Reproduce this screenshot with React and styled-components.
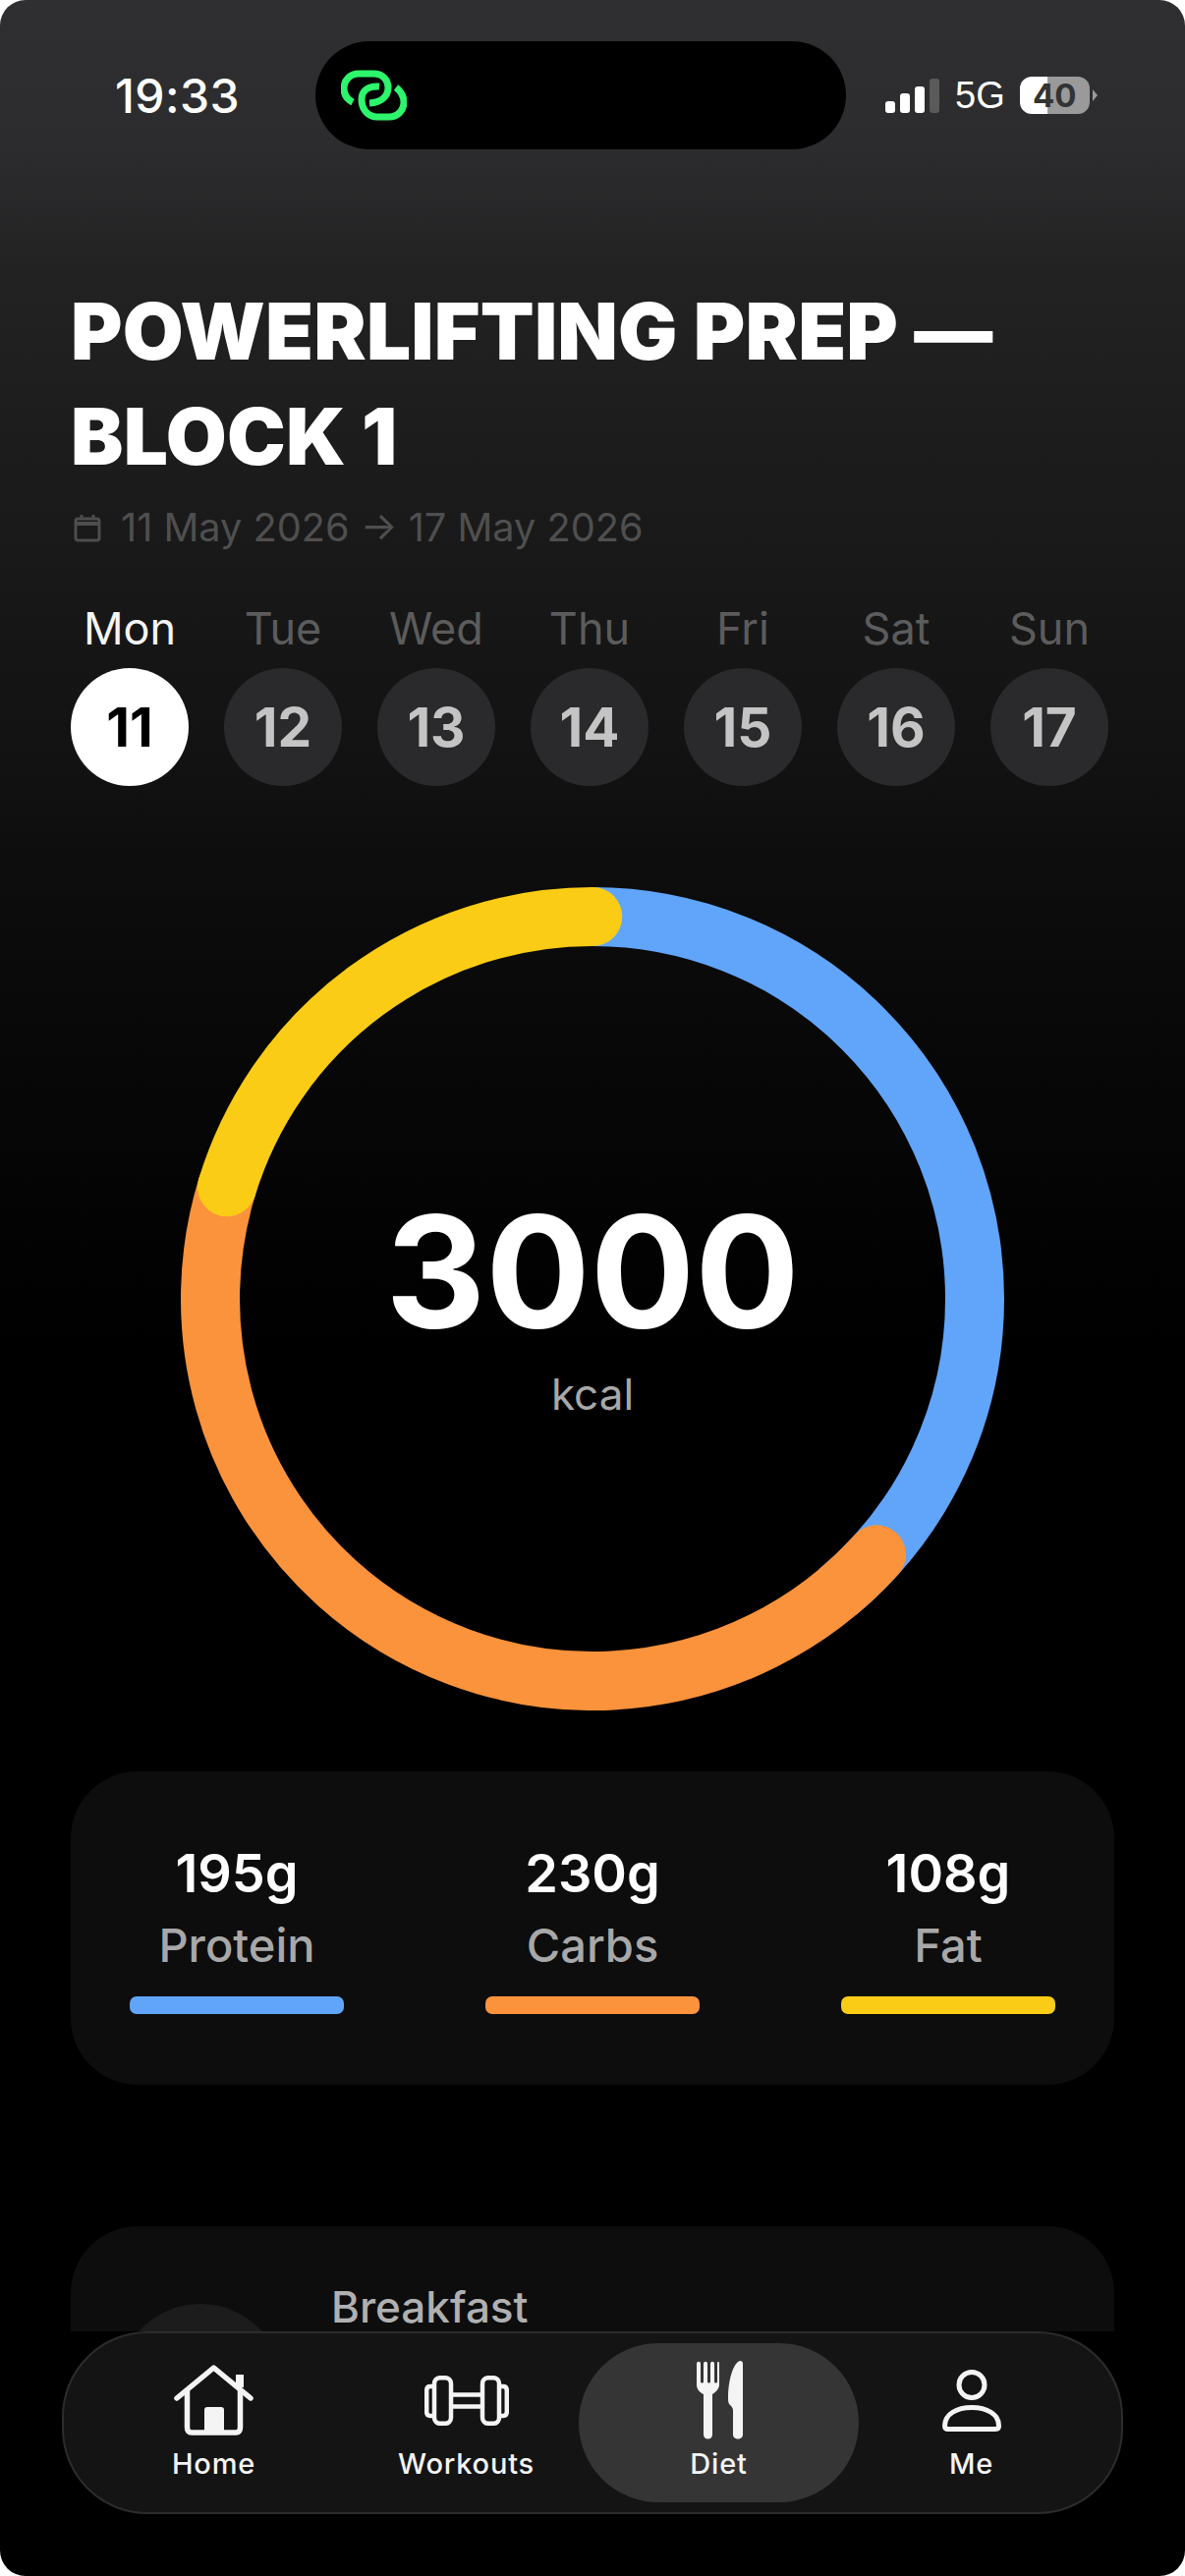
import React from "react";
import styled, { createGlobalStyle } from "styled-components";

const days = [
  ["Mon", 11],
  ["Tue", 12],
  ["Wed", 13],
  ["Thu", 14],
  ["Fri", 15],
  ["Sat", 16],
  ["Sun", 17],
];
const macros = [
  ["195g", "Protein", "#60a5fa"],
  ["230g", "Carbs", "#fb923c"],
  ["108g", "Fat", "#facc15"],
];

function Arc({ start, end, color, round }) {
  const r = 389;
  const c = 2 * Math.PI * r;
  return (
    <circle
      cx="419"
      cy="419"
      r={r}
      fill="none"
      stroke={color}
      strokeWidth="60"
      strokeLinecap={round ? "round" : "butt"}
      strokeDasharray={`${((end - start) / 360) * c} ${c}`}
      transform={`rotate(${start - 90} 419 419)`}
    />
  );
}

function Ring() {
  return (
    <RingSvg viewBox="0 0 838 838">
      <Arc start={0} end={140} color="#60a5fa" />
      <Arc start={132} end={287} color="#fb923c" round />
      <Arc start={287} end={360} color="#facc15" round />
    </RingSvg>
  );
}

function App() {
  return (
    <Screen>
      <GlobalStyle />
      <StatusBar>
        <Time>19:33</Time>
        <Island>
          <svg width="67" height="52" viewBox="0 0 67 52" fill="none" stroke="#2df56c" strokeWidth="7">
            <path d="M12 33C6 30 3 25 3 19C3 10 10 4 18 4H33C43 4 48 11 48 18C48 27 41 33 29 34" />
            <path d="M39 17C27 16 21 22 21 30C21 41 28 48 37 48H49C58 48 64 41 64 33C64 27 61 22 56 18" />
          </svg>
        </Island>
        <StatusRight>
          <Signal>
            <SignalBar $h={12} />
            <SignalBar $h={20} />
            <SignalBar $h={27} />
            <SignalBar $h={35} $off />
          </Signal>
          <Network>5G</Network>
          <Battery>40</Battery>
          <BatteryTip />
        </StatusRight>
      </StatusBar>

      <Scroll>
        <Title>POWERLIFTING PREP — BLOCK 1</Title>
        <DateRow>
          <DateIcon width="28" height="30" viewBox="0 0 28 30" fill="none" stroke="#4d4d4d" strokeWidth="3">
            <rect x="2" y="6" width="24" height="22" rx="2.5" />
            <path d="M2 11H26" strokeWidth="4" />
            <path d="M8 2V6M20 2V6" />
          </DateIcon>
          <span>11 May 2026 → 17 May 2026</span>
        </DateRow>
        <Week>
          {days.map(([name, num], i) => (
            <Day key={name}>
              <DayName $active={i === 0}>{name}</DayName>
              <DayNum $active={i === 0}>{num}</DayNum>
            </Day>
          ))}
        </Week>
        <RingWrap>
          <Ring />
          <RingLabel>
            <Kcal>3000</Kcal>
            <KcalUnit>kcal</KcalUnit>
          </RingLabel>
        </RingWrap>
        <MacroCard>
          {macros.map(([value, name, color]) => (
            <Macro key={name}>
              <MacroValue>{value}</MacroValue>
              <MacroName>{name}</MacroName>
              <MacroBar $color={color} />
            </Macro>
          ))}
        </MacroCard>
        <MealCard>
          <MealIcon />
          <MealName>Breakfast</MealName>
        </MealCard>
      </Scroll>

      <Nav>
        <NavItem>
          <IconSlot>
            <svg width="81" height="72" viewBox="0 0 81 72" fill="none" stroke="#f4f4f4" strokeWidth="5.5" strokeLinecap="round" strokeLinejoin="round">
              <path d="M3 34L40.5 3L78 34" />
              <path d="M67 23V10" strokeWidth="8" strokeLinecap="butt" />
              <path d="M13.5 27V64C13.5 67 15 69 18 69H63C66 69 67.5 67 67.5 64V27" />
              <path d="M31 69V46C31 44 32 43 34 43H48C50 43 51 44 51 46V69Z" fill="#f4f4f4" stroke="none" />
            </svg>
          </IconSlot>
          <NavLabel>Home</NavLabel>
        </NavItem>
        <NavItem>
          <IconSlot>
            <svg width="86" height="51" viewBox="0 0 86 51" fill="none" stroke="#f4f4f4" strokeWidth="4.5" strokeLinejoin="round">
              <path d="M10 11H6C3.5 11 2.2 12.5 2.2 15V37C2.2 39.5 3.5 41 6 41H10" />
              <rect x="10" y="2.2" width="17" height="46.6" rx="6" />
              <rect x="59" y="2.2" width="17" height="46.6" rx="6" />
              <path d="M76 11H80C82.5 11 83.8 12.5 83.8 15V37C83.8 39.5 82.5 41 80 41H76" />
              <path d="M27 19.5H59M27 31.5H59" />
            </svg>
          </IconSlot>
          <NavLabel>Workouts</NavLabel>
        </NavItem>
        <NavItem $active>
          <IconSlot>
            <svg width="48" height="80" viewBox="0 0 48 80" fill="#f4f4f4">
              <path d="M1 3C1 0 5 0 5 3V21C5 23 8 23 8 21V3C8 0 12 0 12 3V21C12 23 15 23 15 21V3C15 0 19 0 19 3V21C19 23 22 23 22 21V3C22 0 24 0 24 3V24C24 29 20 32 17 34V75C17 81 8 81 8 75V34C4 32 1 29 1 24Z" />
              <path d="M45 0C47 0 48 1 48 3V75C48 81 38 81 38 75V51C38 48 37 47 35 45C33 43 33 41 33 37C33 22 37 7 42 2C43 1 44 0 45 0Z" />
            </svg>
          </IconSlot>
          <NavLabel>Diet</NavLabel>
        </NavItem>
        <NavItem>
          <IconSlot>
            <svg width="60" height="63" viewBox="0 0 60 63" fill="none" stroke="#f4f4f4" strokeWidth="5" strokeLinejoin="round">
              <circle cx="30" cy="15.5" r="13" />
              <path d="M2.5 57C2.5 45 15 38.5 30 38.5C45 38.5 57.5 45 57.5 57C57.5 59.5 56.5 60.5 54 60.5H6C3.5 60.5 2.5 59.5 2.5 57Z" />
            </svg>
          </IconSlot>
          <NavLabel>Me</NavLabel>
        </NavItem>
      </Nav>
    </Screen>
  );
}

const GlobalStyle = createGlobalStyle`
  * {
    box-sizing: border-box;
  }
  html, body {
    margin: 0;
    background: #fff;
  }
`;
const Screen = styled.div`
  position: relative;
  width: 1206px;
  height: 2622px;
  overflow: hidden;
  border-radius: 26px;
  background: linear-gradient(180deg, #2f2f31 0, #2c2c2e 150px, #222223 280px, #111 800px, #0d0d0d 880px, #020202 1280px, #000 1400px);
  font-family: Inter, "Liberation Sans", sans-serif;
  color: #fff;
`;
const StatusBar = styled.div`
  display: flex;
  align-items: center;
  height: 110px;
  margin-top: 42px;
  padding-left: 117px;
`;
const Time = styled.div`
  width: 204px;
  font-size: 48px;
  font-weight: 500;
  letter-spacing: 0.4px;
`;
const Island = styled.div`
  display: flex;
  align-items: center;
  width: 540px;
  height: 110px;
  padding-left: 26px;
  border-radius: 55px;
  background: #000;
`;
const StatusRight = styled.div`
  display: flex;
  align-items: center;
  margin-left: 40px;
`;
const Signal = styled.div`
  display: flex;
  align-items: flex-end;
  gap: 5px;
  height: 35px;
`;
const SignalBar = styled.div`
  width: 10px;
  height: ${(p) => p.$h}px;
  border-radius: 3px;
  background: ${(p) => (p.$off ? "#5a5a5a" : "#fff")};
`;
const Network = styled.div`
  margin-left: 16px;
  font-family: "Liberation Sans", sans-serif;
  font-size: 38px;
`;
const Battery = styled.div`
  width: 71px;
  height: 38px;
  margin-left: 15px;
  border-radius: 12px;
  background: linear-gradient(90deg, #fff 40%, #9a9a9a 40%);
  color: #333;
  font-size: 33px;
  font-weight: 700;
  line-height: 38px;
  text-align: center;
`;
const BatteryTip = styled.div`
  width: 0;
  height: 0;
  margin-left: 3px;
  border-top: 6px solid transparent;
  border-bottom: 6px solid transparent;
  border-left: 5px solid #9a9a9a;
`;
const Scroll = styled.div`
  height: 2221px;
  padding: 131px 72px 0;
  overflow: hidden;
`;
const Title = styled.h1`
  width: 960px;
  margin: 0;
  font-size: 80px;
  font-weight: 900;
  line-height: 107px;
  letter-spacing: 0.2px;
`;
const DateRow = styled.div`
  display: flex;
  align-items: center;
  height: 48px;
  gap: 20px;
  margin-top: 16px;
  color: #4f4f4f;
  font-size: 39.7px;
  line-height: 48px;
`;
const DateIcon = styled.svg`
  margin-left: 3px;
`;
const Week = styled.div`
  display: flex;
  justify-content: space-between;
  margin-top: 54px;
  padding-right: 6px;
`;
const Day = styled.div`
  display: flex;
  flex-direction: column;
  align-items: center;
  width: 120px;
  gap: 15px;
`;
const DayName = styled.div`
  color: ${(p) => (p.$active ? "#f4f4f4" : "#5c5c5c")};
  font-size: 45px;
  line-height: 50px;
`;
const DayNum = styled.div`
  display: flex;
  align-items: center;
  justify-content: center;
  width: 120px;
  height: 120px;
  border-radius: 50%;
  background: ${(p) => (p.$active ? "#fff" : "#2a2a2c")};
  color: ${(p) => (p.$active ? "#000" : "#c4c4c4")};
  font-size: 55px;
  font-weight: 700;
`;
const RingWrap = styled.div`
  position: relative;
  display: flex;
  justify-content: center;
  margin-top: 103px;
`;
const RingSvg = styled.svg`
  display: block;
  width: 838px;
  height: 838px;
`;
const RingLabel = styled.div`
  position: absolute;
  top: 0;
  left: 0;
  right: 0;
  bottom: 0;
  display: flex;
  flex-direction: column;
  align-items: center;
  justify-content: center;
  padding-top: 11px;
`;
const Kcal = styled.div`
  font-size: 158px;
  font-weight: 700;
  line-height: 170px;
`;
const KcalUnit = styled.div`
  margin-top: 13px;
  color: #a8a8a8;
  font-size: 44px;
  line-height: 54px;
`;
const MacroCard = styled.div`
  display: flex;
  justify-content: space-between;
  height: 319px;
  margin-top: 62px;
  padding: 73px 60px 0;
  border-radius: 68px;
  background: #0d0d0d;
`;
const Macro = styled.div`
  display: flex;
  flex-direction: column;
  align-items: center;
  width: 218px;
`;
const MacroValue = styled.div`
  font-size: 54px;
  font-weight: 600;
  line-height: 62px;
`;
const MacroName = styled.div`
  margin-top: 15px;
  color: #a8a8a8;
  font-size: 47px;
  font-weight: 500;
  line-height: 54px;
`;
const MacroBar = styled.div`
  width: 100%;
  height: 18px;
  margin-top: 25px;
  border-radius: 7px;
  background: ${(p) => p.$color};
`;
const MealCard = styled.div`
  position: relative;
  display: flex;
  height: 320px;
  margin-top: 144px;
  padding: 58px 0 0 265px;
  border-radius: 68px;
  background: #0d0d0d;
`;
const MealIcon = styled.div`
  position: absolute;
  top: 79px;
  left: 48px;
  width: 168px;
  height: 168px;
  border-radius: 50%;
  background: #1c1c1c;
`;
const MealName = styled.div`
  color: #b0b0b0;
  font-size: 44px;
  font-weight: 500;
  line-height: 48px;
`;
const Nav = styled.nav`
  position: absolute;
  left: 63px;
  top: 2373px;
  display: grid;
  grid-template-columns: repeat(4, 257px);
  align-items: center;
  justify-content: center;
  width: 1080px;
  height: 186px;
  border: 2px solid #2c2c2c;
  border-radius: 87px;
  background: #141414;
`;
const NavItem = styled.div`
  display: flex;
  flex-direction: column;
  align-items: center;
  gap: 6px;
  height: 162px;
  margin: 0 ${(p) => (p.$active ? "-14px" : "0")};
  padding-top: 16px;
  border-radius: 81px;
  background: ${(p) => (p.$active ? "#353535" : "transparent")};
`;
const IconSlot = styled.div`
  display: flex;
  align-items: center;
  justify-content: center;
  height: 84px;
`;
const NavLabel = styled.div`
  color: #f4f4f4;
  font-size: 29px;
  font-weight: 500;
  line-height: 34px;
  letter-spacing: 0.8px;
`;

export default App;
